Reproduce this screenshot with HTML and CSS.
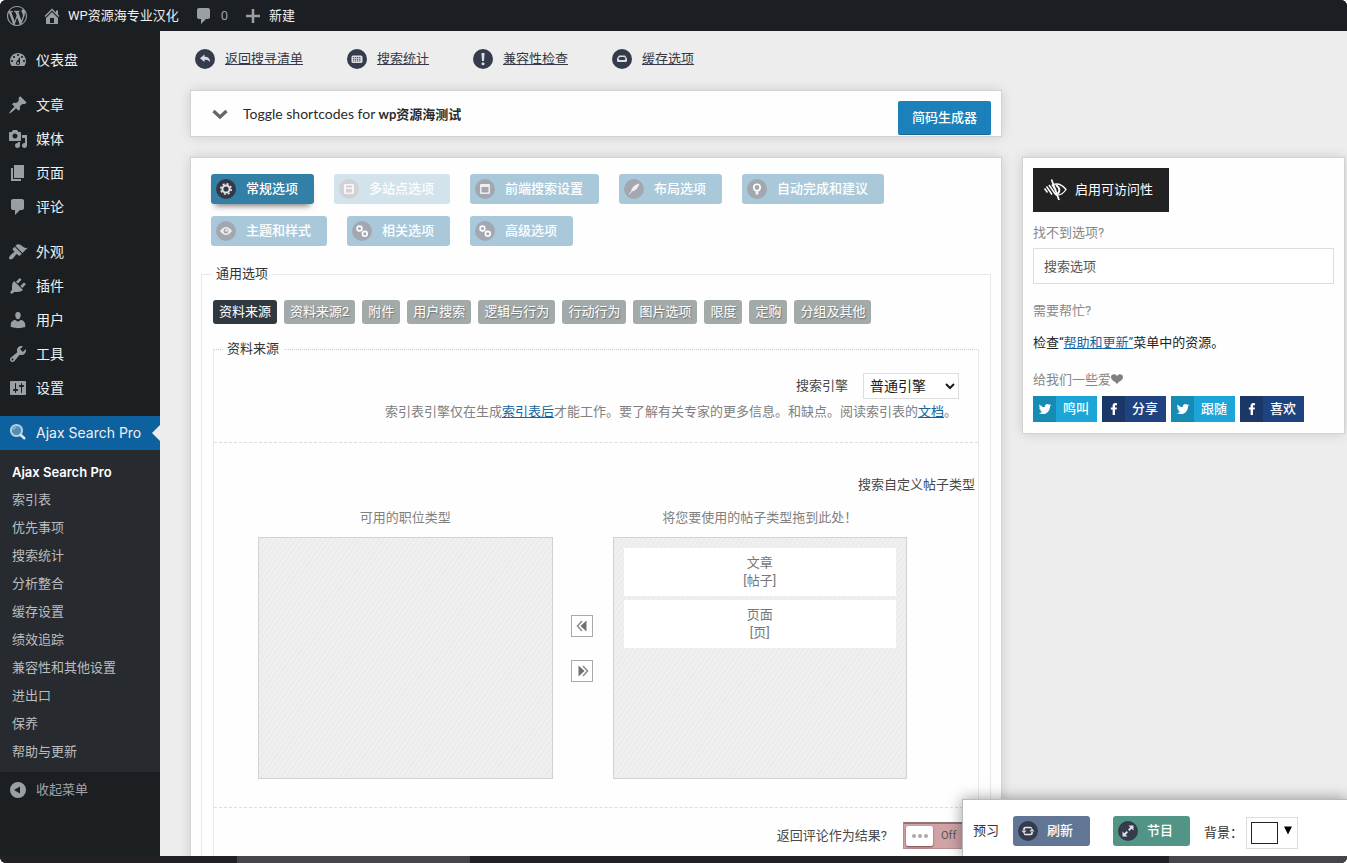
FILE: index.html
```html
<!DOCTYPE html>
<html lang="zh-CN">
<head>
<meta charset="utf-8">
<title>Ajax Search Pro</title>
<link rel="stylesheet" href="styles.css">
</head>
<body>
<div class="app">
  <header class="topbar">
    <a href="#" class="topbar-item" aria-label="WordPress"><svg class="icon" viewBox="0 0 20 20"><path d="M20 10c0-5.51-4.49-10-10-10C4.48 0 0 4.49 0 10c0 5.52 4.48 10 10 10 5.51 0 10-4.48 10-10zM7.78 15.37L4.37 6.22c.55-.02 1.17-.08 1.17-.08.5-.06.44-1.13-.06-1.11 0 0-1.45.11-2.37.11-.18 0-.37 0-.58-.01C4.12 2.69 6.87 1.11 10 1.11c2.33 0 4.45.87 6.05 2.34-.68-.11-1.65.39-1.65 1.58 0 .74.45 1.36.9 2.1.35.61.55 1.36.55 2.46 0 1.49-1.4 5-1.4 5l-3.03-8.37c.54-.02.82-.17.82-.17.5-.05.44-1.25-.06-1.22 0 0-1.44.12-2.38.12-.87 0-2.33-.12-2.33-.12-.5-.03-.56 1.2-.06 1.22l.92.08 1.26 3.41zM17.41 10c.24-.64.74-1.87.43-4.25.7 1.29 1.05 2.71 1.05 4.25 0 3.29-1.73 6.24-4.4 7.78.97-2.59 1.94-5.2 2.92-7.78zM6.1 18.09C3.12 16.65 1.11 13.53 1.11 10c0-1.3.23-2.48.72-3.59C3.25 10.3 4.67 14.2 6.1 18.09zm4.03-6.63l2.58 6.98c-.86.29-1.76.45-2.71.45-.79 0-1.57-.11-2.29-.33.81-2.38 1.62-4.74 2.42-7.1z"/></svg></a>
    <a href="#" class="topbar-item"><svg class="icon" viewBox="0 0 20 20"><path d="M16 8.5l1.53 1.53-1.06 1.06L10 4.6l-6.47 6.49-1.06-1.06L10 2.5l4 4v-2h2v4zm-6-2.46l6 5.99V18H4v-5.97zM12 17v-5H8v5h4z"/></svg>WP资源海专业汉化</a>
    <a href="#" class="topbar-item muted"><svg class="icon" viewBox="0 0 20 20"><path d="M5 2h9c1.1 0 2 .9 2 2v7c0 1.1-.9 2-2 2h-2l-5 5v-5H5c-1.1 0-2-.9-2-2V4c0-1.1.9-2 2-2z"/></svg>0</a>
    <a href="#" class="topbar-item"><svg class="icon" viewBox="0 0 20 20"><path d="M17 8.700v2.600h-5.700V17H8.700v-5.700H3V8.700h5.700V3h2.600v5.700z"/></svg>新建</a>
  </header>

  <nav class="sidebar">
    <ul class="menu">
      <li><a href="#"><svg class="icon" viewBox="0 0 20 20"><path d="M3.76 16h12.480c1.100-1.370 1.760-3.110 1.760-5 0-4.420-3.580-8-8-8s-8 3.580-8 8c0 1.890.66 3.630 1.760 5zM10 4c.55 0 1 .45 1 1s-.45 1-1 1-1-.45-1-1 .45-1 1-1zM6 6c.55 0 1 .45 1 1s-.45 1-1 1-1-.45-1-1 .45-1 1-1zm8 0c.55 0 1 .45 1 1s-.45 1-1 1-1-.45-1-1 .45-1 1-1zm-5.370 5.550L12 7v6c0 1.100-.9 2-2 2s-2-.9-2-2c0-.57.24-1.080.63-1.450zM4 10c.55 0 1 .45 1 1s-.45 1-1 1-1-.45-1-1 .45-1 1-1zm12 0c.55 0 1 .45 1 1s-.45 1-1 1-1-.45-1-1 .45-1 1-1zm-5 3c0-.55-.45-1-1-1s-1 .45-1 1 .45 1 1 1 1-.45 1-1z"/></svg>仪表盘</a></li>
      <li class="spaced"><a href="#"><svg class="icon" viewBox="0 0 20 20"><path d="M10.440 3.020l1.820-1.820 6.360 6.350-1.830 1.820c-1.050-.68-2.480-.57-3.410.36l-.75.75c-.92.93-1.040 2.350-.35 3.410l-1.830 1.820-2.410-2.410-2.800 2.790c-.42.42-3.380 2.710-3.800 2.290s1.860-3.390 2.280-3.810l2.790-2.790L4.100 9.360l1.830-1.820c1.050.69 2.480.57 3.400-.36l.75-.75c.93-.92 1.050-2.350.36-3.410z"/></svg>文章</a></li>
      <li><a href="#"><svg class="icon" viewBox="0 0 20 20"><path d="M13 11V4c0-.55-.45-1-1-1h-1.670L9 1H5L3.670 3H2c-.55 0-1 .45-1 1v7c0 .55.45 1 1 1h10c.55 0 1-.45 1-1zM7 4.500c1.380 0 2.500 1.120 2.500 2.500S8.380 9.500 7 9.500 4.500 8.380 4.500 7 5.620 4.500 7 4.500zM14 6h5v10.500c0 1.380-1.120 2.500-2.500 2.500S14 17.880 14 16.500s1.120-2.500 2.500-2.500c.17 0 .34.02.5.05V9h-3V6zm-4 8.050V13h2v3.500c0 1.380-1.120 2.500-2.500 2.500S7 17.880 7 16.500 8.120 14 9.500 14c.17 0 .34.02.5.05z"/></svg>媒体</a></li>
      <li><a href="#"><svg class="icon" viewBox="0 0 20 20"><path d="M6 15V2h10v13H6zm-1 1h8v2H3V5h2v11z"/></svg>页面</a></li>
      <li><a href="#"><svg class="icon" viewBox="0 0 20 20"><path d="M5 2h9c1.1 0 2 .9 2 2v7c0 1.1-.9 2-2 2h-2l-5 5v-5H5c-1.1 0-2-.9-2-2V4c0-1.1.9-2 2-2z"/></svg>评论</a></li>
      <li class="spaced"><a href="#"><svg class="icon" viewBox="0 0 20 20"><path d="M14.480 11.060L7.410 3.990l1.500-1.500c.5-.56 2.300-.47 3.510.32 1.210.8 1.430 1.280 2.910 2.100 1.180.64 2.450 1.260 4.450.85zm-.71.71L6.700 4.700 4.930 6.470c-.39.39-.39 1.020 0 1.410l1.060 1.060c.39.39.39 1.030 0 1.420-.6.6-1.430 1.110-2.210 1.690-.35.26-.7.53-1.010.84C1.430 14.230.4 16.080 1.400 17.070c.99 1 2.840-.03 4.180-1.360.31-.31.58-.66.85-1.020.57-.78 1.080-1.610 1.690-2.210.39-.39 1.020-.39 1.410 0l1.060 1.060c.39.39 1.020.39 1.410 0z"/></svg>外观</a></li>
      <li><a href="#"><svg class="icon" viewBox="0 0 20 20"><path d="M13.110 4.360L9.870 7.600 8 5.730l3.240-3.240c.35-.34 1.050-.2 1.560.32.52.51.66 1.210.31 1.550zm-8 1.770l.91-1.120 9.010 9.010-1.190.84c-.71.71-2.630 1.160-3.820 1.160H6.140L4.900 17.260c-.59.59-1.540.59-2.120 0-.59-.58-.59-1.530 0-2.120l1.240-1.240v-3.880c0-1.130.4-3.190 1.090-3.890zm7.260 3.970l3.240-3.240c.34-.35 1.040-.21 1.550.31.52.51.66 1.210.31 1.550l-3.240 3.250z"/></svg>插件</a></li>
      <li><a href="#"><svg class="icon" viewBox="0 0 20 20"><path d="M10 9.250c-2.270 0-2.730-3.440-2.730-3.440C7 4.020 7.820 2 9.970 2c2.160 0 2.980 2.020 2.710 3.810 0 0-.41 3.440-2.680 3.440zm0 2.570L12.720 10c2.390 0 4.520 2.330 4.520 4.530v2.490s-3.650 1.130-7.240 1.130c-3.650 0-7.240-1.130-7.240-1.130v-2.490c0-2.250 1.940-4.480 4.470-4.480z"/></svg>用户</a></li>
      <li><a href="#"><svg class="icon" viewBox="0 0 20 20"><path d="M16.680 9.770c-1.340 1.340-3.300 1.670-4.950.99l-5.410 6.520c-.99.99-2.590.99-3.580 0s-.99-2.590 0-3.570l6.520-5.420c-.68-1.650-.35-3.610.99-4.950 1.280-1.280 3.120-1.620 4.720-1.060l-2.890 2.890 2.820 2.820 2.860-2.870c.53 1.580.18 3.390-1.080 4.650zM3.810 16.210c.4.39 1.040.39 1.430 0 .4-.4.4-1.040 0-1.430-.39-.4-1.030-.4-1.430 0-.39.39-.39 1.030 0 1.430z"/></svg>工具</a></li>
      <li><a href="#"><svg class="icon" viewBox="0 0 20 20"><path d="M18 16V4c0-.55-.45-1-1-1H3c-.55 0-1 .45-1 1v12c0 .55.45 1 1 1h14c.55 0 1-.45 1-1zM8 11h1c.55 0 1 .45 1 1s-.45 1-1 1H8v1.500c0 .28-.22.5-.5.5s-.5-.22-.5-.5V13H6c-.55 0-1-.45-1-1s.45-1 1-1h1V5.500c0-.28.22-.5.5-.5s.5.22.5.5V11zm5-2h-1c-.55 0-1-.45-1-1s.45-1 1-1h1V5.500c0-.28.22-.5.5-.5s.5.22.5.5V7h1c.55 0 1 .45 1 1s-.45 1-1 1h-1v5.500c0 .28-.22.5-.5.5s-.5-.22-.5-.5V9z"/></svg>设置</a></li>
      <li class="spaced current"><a href="#"><svg class="icon" viewBox="0 0 20 20"><circle cx="8.500" cy="7.500" r="5.600" fill="#4d8fb8" stroke="#b9cdd9" stroke-width="2"/><path d="M5.500 7a3.500 3.500 0 0 1 3-3" fill="none" stroke="#8fc0dd" stroke-width="1.200"/><path d="M12.800 12l3.500 3.200" stroke="#dfe5e8" stroke-width="2.600" stroke-linecap="round"/></svg>Ajax Search Pro</a></li>
    </ul>
    <ul class="submenu">
      <li><a href="#" class="active">Ajax Search Pro</a></li>
      <li><a href="#">索引表</a></li>
      <li><a href="#">优先事项</a></li>
      <li><a href="#">搜索统计</a></li>
      <li><a href="#">分析整合</a></li>
      <li><a href="#">缓存设置</a></li>
      <li><a href="#">绩效追踪</a></li>
      <li><a href="#">兼容性和其他设置</a></li>
      <li><a href="#">进出口</a></li>
      <li><a href="#">保养</a></li>
      <li><a href="#">帮助与更新</a></li>
    </ul>
    <button type="button" class="collapse"><svg class="icon" viewBox="0 0 20 20"><path fill-rule="evenodd" d="M10 2a8 8 0 1 0 0 16 8 8 0 0 0 0-16zm2 4.500v7L6 10z"/></svg>收起菜单</button>
  </nav>

  <main class="main">
    <nav class="quick-links">
      <a href="#"><svg class="badge" viewBox="0 0 20 20"><circle cx="10" cy="10" r="10"/><path class="glyph" d="M5 9.300l4.500-3.800v2.300c3.500 0 5.500 1.700 5.500 5.200-1.200-1.800-2.800-2.300-5.500-2.300v2.400z"/></svg><span>返回搜寻清单</span></a>
      <a href="#"><svg class="badge" viewBox="0 0 20 20"><circle cx="10" cy="10" r="10"/><rect class="glyph" x="4.500" y="6.500" width="11" height="7.500" rx="1.500"/><path stroke="#343c4c" stroke-width=".9" stroke-dasharray="1.200 .7" d="M6 8.600h8M6 10.300h8M6 12h8"/></svg><span>搜索统计</span></a>
      <a href="#"><svg class="badge" viewBox="0 0 20 20"><circle cx="10" cy="10" r="10"/><path class="glyph" d="M8.400 4h3.200L11 12H9z"/><circle class="glyph" cx="10" cy="14.700" r="1.500"/></svg><span>兼容性检查</span></a>
      <a href="#"><svg class="badge" viewBox="0 0 20 20"><circle cx="10" cy="10" r="10"/><path class="glyph" fill-rule="evenodd" d="M7 6.500h6l2 3v2.500q0 1-1 1H6q-1 0-1-1V9.500zM8.500 8q-2 0-2 1.500T8.500 11h3q2 0 2-1.500T11.500 8z"/></svg><span>缓存选项</span></a>
    </nav>

    <div class="columns">
      <div class="content">
        <section class="panel shortcodes">
          <svg class="chevron" viewBox="0 0 20 20"><path d="M3.500 7l6.500 6 6.500-6" fill="none" stroke="#666" stroke-width="3.200"/></svg>
          <p>Toggle shortcodes for <b>wp资源海测试</b></p>
          <button type="button" class="generate">简码生成器</button>
        </section>

        <section class="panel options">
          <div class="tabs">
            <button type="button" class="tab selected"><svg class="badge" viewBox="0 0 20 20"><circle cx="10" cy="10" r="10"/><g fill="none" stroke="#e3e3e6"><circle cx="10" cy="10" r="3.600" stroke-width="2"/><circle cx="10" cy="10" r="5.200" stroke-width="1.600" stroke-dasharray="2 2.080"/></g></svg>常规选项</button>
            <button type="button" class="tab disabled" disabled><svg class="badge" viewBox="0 0 20 20"><circle cx="10" cy="10" r="10"/><path class="glyph" fill-rule="evenodd" d="M6 5h8l1 1v8q0 1-1 1H6q-1 0-1-1V6q0-1 1-1zm1 1.500v2h6v-2zm0 3.500v3.500h6V10z"/></svg>多站点选项</button>
            <button type="button" class="tab"><svg class="badge" viewBox="0 0 20 20"><circle cx="10" cy="10" r="10"/><path class="glyph" fill-rule="evenodd" d="M6 5h8q1 0 1 1v8q0 1-1 1H6q-1 0-1-1V6q0-1 1-1zm.5 3v5.500h7V8z"/></svg>前端搜索设置</button>
            <button type="button" class="tab"><svg class="badge" viewBox="0 0 20 20"><circle cx="10" cy="10" r="10"/><path class="glyph" d="M15.500 4.500c-1 4-3.500 7-7.500 8l-2.500 3-.7-.6 2.400-2.900C8 8 11 5.500 15.500 4.500z"/></svg>布局选项</button>
            <button type="button" class="tab"><svg class="badge" viewBox="0 0 20 20"><circle cx="10" cy="10" r="10"/><circle cx="10" cy="8.500" r="3.200" fill="none" stroke="#fff" stroke-width="1.600"/><path class="glyph" d="M8.500 12h3v3l-1.500 1-1.500-1z"/></svg>自动完成和建议</button>
            <button type="button" class="tab"><svg class="badge" viewBox="0 0 20 20"><circle cx="10" cy="10" r="10"/><path class="glyph" fill-rule="evenodd" d="M4 10q6-8 12 0-6 8-12 0zm6-2.500a2.500 2.500 0 1 0 0 5 2.500 2.500 0 0 0 0-5z"/><circle class="glyph" cx="10.500" cy="9.500" r="1.200"/></svg>主题和样式</button>
            <button type="button" class="tab"><svg class="badge" viewBox="0 0 20 20"><circle cx="10" cy="10" r="10"/><g fill="none" stroke="#fff" stroke-width="1.600"><circle cx="7.500" cy="7.500" r="2.400"/><circle cx="12.800" cy="12.800" r="2.400"/></g></svg>相关选项</button>
            <button type="button" class="tab"><svg class="badge" viewBox="0 0 20 20"><circle cx="10" cy="10" r="10"/><g fill="none" stroke="#fff" stroke-width="1.600"><circle cx="7.500" cy="7.500" r="2.400"/><circle cx="12.800" cy="12.800" r="2.400"/></g></svg>高级选项</button>
          </div>

          <fieldset class="group">
            <legend>通用选项</legend>
            <div class="pills">
              <button type="button" class="pill selected">资料来源</button>
              <button type="button" class="pill">资料来源2</button>
              <button type="button" class="pill">附件</button>
              <button type="button" class="pill">用户搜索</button>
              <button type="button" class="pill">逻辑与行为</button>
              <button type="button" class="pill">行动行为</button>
              <button type="button" class="pill">图片选项</button>
              <button type="button" class="pill">限度</button>
              <button type="button" class="pill">定购</button>
              <button type="button" class="pill">分组及其他</button>
            </div>

            <fieldset class="subgroup">
              <legend>资料来源</legend>
              <div class="row engine">
                <div class="field">
                  <label for="engine">搜索引擎</label>
                  <select id="engine"><option>普通引擎</option></select>
                </div>
                <p>索引表引擎仅在生成<a href="#">索引表后</a>才能工作。要了解有关专家的更多信息。和缺点。阅读索引表的<a href="#">文档</a>。</p>
              </div>

              <div class="row types">
                <h4>搜索自定义帖子类型</h4>
                <div class="sorter">
                  <div class="list">
                    <h5>可用的职位类型</h5>
                    <ul class="drop"></ul>
                  </div>
                  <div class="movers">
                    <button type="button" aria-label="全部移到左侧"><svg viewBox="0 0 20 20"><path d="M14.500 4.500v11L8.500 10z"/><path d="M10 5l-4.500 5 4.500 5" fill="none" stroke="#8a8a8a" stroke-width="1.500"/></svg></button>
                    <button type="button" aria-label="全部移到右侧"><svg viewBox="0 0 20 20"><path d="M6.500 4.500v11l6-5.500z"/><path d="M11 5l4.500 5-4.500 5" fill="none" stroke="#8a8a8a" stroke-width="1.500"/></svg></button>
                  </div>
                  <div class="list">
                    <h5>将您要使用的帖子类型拖到此处！</h5>
                    <ul class="drop">
                      <li>文章<br>[帖子]</li>
                      <li>页面<br>[页]</li>
                    </ul>
                  </div>
                </div>
              </div>

              <div class="row comments">
                <label for="comments">返回评论作为结果?</label>
                <button type="button" id="comments" class="switch"><span class="knob"><i></i><i></i><i></i></span><span>Off</span></button>
              </div>
            </fieldset>
          </fieldset>
        </section>
      </div>

      <aside class="panel help">
        <button type="button" class="access"><svg viewBox="0 0 24 24" fill="none" stroke="#fff"><path d="M10 6.500c5-1.500 9.500.5 13 5-3 4.500-6.500 6-10 5.500" stroke-width="1.300"/><path d="M13 7q6 4.500 1.500 9" stroke-width="2"/><path d="M1.500 10.500l3 4M3.500 8.500l5.500 8M6 7l7 10M9 6.500l4 6" stroke-width="1.500"/><path d="M8.500 1.500l7.500 20.500" stroke-width="1.700"/></svg>启用可访问性</button>
        <label for="find">找不到选项?</label>
        <input id="find" type="text" placeholder="搜索选项">
        <h3>需要帮忙?</h3>
        <p>检查“<a href="#">帮助和更新”</a>菜单中的资源。</p>
        <h3 class="love">给我们一些爱<svg viewBox="0 0 12 10"><path d="M6 10C4.500 7.500 0 6.500 0 3 0 0 4.500-1 6 2.200 7.500-1 12 0 12 3c0 3.500-4.500 4.500-6 7z"/></svg></h3>
        <div class="social">
          <a href="#" class="tw"><span><svg viewBox="0 0 20 20"><path d="M18.940 4.460c-.49.73-1.110 1.380-1.830 1.900.01.15.01.31.01.47 0 4.850-3.690 10.440-10.430 10.440-2.070 0-4-.61-5.630-1.650.29.03.58.05.88.05 1.720 0 3.300-.59 4.550-1.570-1.600-.03-2.950-1.090-3.420-2.550.22.04.45.07.69.07.33 0 .66-.05.96-.13-1.670-.34-2.940-1.820-2.940-3.600v-.04c.5.27 1.060.44 1.660.46-.98-.66-1.630-1.780-1.630-3.060 0-.67.18-1.300.5-1.840 1.810 2.220 4.510 3.680 7.560 3.830-.06-.27-.1-.55-.1-.84 0-2.020 1.650-3.660 3.670-3.660 1.060 0 2.010.44 2.680 1.160.83-.17 1.620-.47 2.330-.89-.28.85-.86 1.570-1.620 2.020.75-.08 1.450-.28 2.110-.57z"/></svg></span>鸣叫</a>
          <a href="#" class="fb"><span><svg viewBox="0 0 20 20"><path d="M8 18.500v-7.700H5.500V7.700H8V5.400C8 2.900 9.500 1.500 11.800 1.500l2.500.2v2.800h-1.600c-1 0-1.300.6-1.300 1.300v1.900h2.800l-.4 3.100h-2.400v7.700z"/></svg></span>分享</a>
          <a href="#" class="tw"><span><svg viewBox="0 0 20 20"><path d="M18.940 4.460c-.49.73-1.110 1.380-1.830 1.900.01.15.01.31.01.47 0 4.850-3.690 10.440-10.430 10.440-2.070 0-4-.61-5.630-1.650.29.03.58.05.88.05 1.720 0 3.300-.59 4.550-1.570-1.600-.03-2.950-1.090-3.420-2.550.22.04.45.07.69.07.33 0 .66-.05.96-.13-1.670-.34-2.940-1.820-2.940-3.600v-.04c.5.27 1.060.44 1.660.46-.98-.66-1.630-1.780-1.630-3.060 0-.67.18-1.300.5-1.840 1.810 2.220 4.510 3.680 7.560 3.830-.06-.27-.1-.55-.1-.84 0-2.020 1.650-3.660 3.670-3.660 1.060 0 2.010.44 2.680 1.160.83-.17 1.620-.47 2.330-.89-.28.85-.86 1.570-1.620 2.020.75-.08 1.450-.28 2.110-.57z"/></svg></span>跟随</a>
          <a href="#" class="fb"><span><svg viewBox="0 0 20 20"><path d="M8 18.500v-7.700H5.500V7.700H8V5.400C8 2.900 9.500 1.500 11.800 1.500l2.500.2v2.800h-1.600c-1 0-1.300.6-1.300 1.300v1.900h2.800l-.4 3.100h-2.400v7.700z"/></svg></span>喜欢</a>
        </div>
      </aside>
    </div>

    <div class="preview">
      <span>预习</span>
      <button type="button" class="action refresh"><svg class="badge" viewBox="0 0 20 20"><circle cx="10" cy="10" r="10"/><g fill="none" stroke="#e8e8ec" stroke-width="1.700"><path d="M6 9V8q0-1.500 1.500-1.500H12q1.500 0 1.500 1M14 11v1q0 1.500-1.500 1.500H8q-1.500 0-1.500-1"/></g><path class="glyph" d="M3.500 9.500h5L6 12.500zM11.500 10.500h5L14 7.500z"/></svg>刷新</button>
      <button type="button" class="action show"><svg class="badge" viewBox="0 0 20 20"><circle cx="10" cy="10" r="10"/><path class="glyph" d="M10.500 4.500h5v5zM4.500 10.500v5h5z"/><path d="M6.500 13.500l7-7" stroke="#e8e8ec" stroke-width="1.800" stroke-dasharray="4 2"/></svg>节目</button>
      <div class="background"><label for="swatch">背景：</label><button type="button" id="swatch" class="swatch"><i></i><svg viewBox="0 0 10 10"><path d="M0 0h10L5 10z"/></svg></button></div>
    </div>
  </main>
  <footer class="strip"><i class="one"></i><i class="two"></i></footer>
</div>
</body>
</html>
```
FILE: styles.css
```css
* { box-sizing: border-box; }
body { margin: 0; background: #fff; color: #333; font: 13px/18px Roboto, "Noto Sans CJK SC", sans-serif; }
button, input, select { font: inherit; color: inherit; }
button { border: 0; padding: 0; cursor: pointer; }
ul, p, h3, h4, h5 { margin: 0; padding: 0; font-size: 13px; font-weight: 400; }
ul { list-style: none; }
a { color: #1564a0; }

.app { display: grid; grid-template: 31px minmax(0, 1fr) 7px / 160px minmax(0, 1fr); height: 100vh; overflow: hidden; border-radius: 6px; background: #1b1f23; }
.icon { width: 20px; height: 20px; flex: none; fill: #9a9fa4; }
.badge { width: 20px; height: 20px; flex: none; fill: #343c4c; }
.badge .glyph { fill: #dcdde4; }

.topbar { grid-column: 1 / -1; display: flex; gap: 15px; align-items: center; padding-left: 7px; background: #1b1f24; }
.topbar-item { display: flex; align-items: center; gap: 6px; color: #f0f0f1; text-decoration: none; }
.topbar-item.muted { color: #9a9fa4; gap: 7px; }

.sidebar { background: #1b1f22; padding-top: 12px; overflow: hidden; }
.menu a { display: flex; align-items: center; gap: 8px; height: 34px; padding-left: 8px; color: #f0f0f1; text-decoration: none; font: 14px/20px Inter, "Noto Sans CJK SC", sans-serif; }
.spaced { margin-top: 11px; }
.current { position: relative; background: #0e619f; }
.current::after { content: ""; position: absolute; right: 0; top: 9px; border: 8px solid transparent; border-left: 0; border-right-color: #ededed; }
.submenu { padding: 8px 0 6px; background: #272b2f; }
.submenu a { display: block; padding: 5px 12px; color: #babdc0; text-decoration: none; }
.submenu .active { color: #fff; font-weight: 600; font-family: Inter, sans-serif; }
.collapse { display: flex; align-items: center; gap: 8px; height: 36px; padding-left: 8px; background: none; color: #a0a4a8; }

.main { position: relative; overflow: hidden; padding: 18px 3px 0 31px; background: #ededed; }
.quick-links { display: flex; gap: 44px; padding-left: 4px; height: 42px; }
.quick-links a { display: flex; gap: 10px; height: 20px; align-items: center; color: #343844; }
.columns { display: grid; grid-template-columns: minmax(0, 1fr) 321px; gap: 22px; align-items: start; }
.panel { background: #fefefe; outline: 1px solid #d2d2d2; box-shadow: 0 0 12px rgba(0, 0, 0, .16); }

.shortcodes { display: flex; height: 45px; padding: 0 10px 0 19px; align-items: center; }
.shortcodes p { flex: 1; font-size: 14px; font-family: Lato, "Noto Sans CJK SC", sans-serif; color: #2b2b2b; }
.shortcodes p b { font-weight: 700; font-size: 13px; }
.chevron { width: 20px; height: 20px; margin-right: 13px; }
.generate { height: 34px; padding: 0 14px; margin-top: 9px; border-radius: 2px; background: #1c80bb; border-bottom: 1px solid #176894; color: #fff; font-weight: 500; }

.options { margin-top: 22px; padding: 16px 10px 0; }
.tabs { display: flex; flex-wrap: wrap; gap: 12px 20px; padding-left: 10px; }
.tab { display: flex; align-items: center; gap: 10px; height: 30px; padding: 0 16px 0 5px; border-radius: 3px; background: #a9c9db; color: #fff; font-weight: 500; }
.tab .badge { fill: #a3a7b0; }
.tab .glyph { fill: #f2eef0; }
.tab.selected { background: #3280a5; box-shadow: 0 6px 6px -4px rgba(0, 0, 0, .5); }
.tab.selected .badge { fill: #343844; }
.tab.disabled { opacity: .5; }

fieldset { min-width: 0; margin: 0; padding: 0; border: 1px solid #e8e8e8; }
legend { padding: 0 4px; line-height: 18px; }
.group { margin-top: 19px; padding: 0 11px; }
.group > legend { margin-left: -1px; }
.pills { display: flex; flex-wrap: wrap; gap: 7px; padding-top: 17px; }
.pill { height: 24px; padding: 0 6px; border-radius: 3px; background: #a3aaaa; color: #fff; text-shadow: 1px 1px 1px rgba(60, 60, 60, .5); }
.pill.selected { background: #303840; }
.subgroup { margin-top: 16px; border-top-style: dotted; border-top-color: #ccc; }
.subgroup > legend { margin-left: 9px; }
.row { border-bottom: 1px dashed #ddd; }
.engine { padding: 15px 19px 21px; text-align: right; color: #808080; }
.field { display: flex; justify-content: flex-end; align-items: center; gap: 15px; color: #484848; height: 26px; }
.field select { width: 96px; height: 26px; border: 1px solid #ddd; background: #fff; color: #1b1b1b; font-size: 14px; padding-left: 2px; }
.engine p { margin-top: 4px; padding-right: 2px; }
.types { padding: 33px 0 28px; }
.types h4 { text-align: right; padding-right: 3px; color: #484848; }
.sorter { display: flex; margin-top: 15px; padding: 0 71px 0 44px; color: #808080; }
.list { flex: 1; text-align: center; }
.drop { height: 242px; margin-top: 10px; padding: 10px; border: 1px solid #d2d2d2; background: repeating-linear-gradient(125deg, #f0f0f0 0 2px, #ebebeb 2px 4px); }
.drop li { padding: 6px 0; margin-bottom: 4px; background: #fff; color: #777; }
.movers { display: flex; flex-direction: column; gap: 23px; padding: 106px 20px 0 18px; }
.movers button { width: 22px; height: 22px; border: 1px solid #aaa; background: #fff; }
.movers svg { display: block; width: 20px; height: 20px; fill: #707070; }
.comments { display: flex; justify-content: flex-end; align-items: center; gap: 16px; height: 56px; padding-right: 9px; color: #484848; }
.switch { display: flex; align-items: center; gap: 8px; width: 66px; height: 27px; padding: 2px; border: 1px solid #b38f91; border-top: 2px solid #8d7375; background: #d1a3a5; color: #555; font-size: 11px; }
.knob { display: flex; gap: 2px; align-items: center; justify-content: center; width: 27px; height: 20px; border-radius: 2px; background: #fff; box-shadow: 0 1px 2px #744; }
.knob i { width: 4px; height: 4px; border-radius: 50%; background: #aaa; }

.help { display: flex; flex-direction: column; align-items: flex-start; margin-top: 67px; padding: 10px 10px 11px; }
.help label, .help h3 { color: #878787; }
.access { display: flex; align-items: center; gap: 8px; height: 44px; padding: 0 16px 0 10px; background: #222; color: #fff; }
.access svg { width: 24px; height: 24px; }
.help label { margin-top: 12px; }
.help input { width: 100%; height: 36px; margin-top: 6px; padding: 0 10px; border: 1px solid #ddd; background: #fff; }
.help input::placeholder { color: #555; opacity: 1; }
.help h3 { margin-top: 18px; }
.help p { margin-top: 14px; color: #222; }
.help h3.love { margin-top: 19px; }
.love svg { width: 12px; height: 10px; fill: #808080; }
.social { display: flex; gap: 5px; margin-top: 7px; }
.social a { display: flex; align-items: center; height: 26px; width: 64px; gap: 7px; color: #fff; text-decoration: none; font-weight: 500; }
.social span { display: flex; align-items: center; justify-content: center; width: 23px; height: 26px; }
.social svg { width: 14px; height: 14px; fill: #fff; }
.tw { background: #1ba5d8; }
.tw span { background: #168bb3; }
.fb { background: #1f4380; }
.fb span { background: #1a3768; }

.preview { position: absolute; right: 0; bottom: 0; display: flex; align-items: center; width: 385px; height: 57px; padding: 6px 0 0 10px; background: #fff; border: 1px solid #bbb; border-width: 1px 0 0 1px; box-shadow: 0 0 14px rgba(0, 0, 0, .4); }
.action { display: flex; align-items: center; gap: 9px; height: 30px; width: 77px; padding-left: 5px; border-radius: 3px; color: #fff; font-weight: 500; }
.refresh { margin-left: 14px; background: #607694; }
.show { margin: 0 14px 0 23px; background: #529486; }
.background { display: flex; align-items: center; gap: 3px; margin-top: 3px; }
.swatch { display: flex; align-items: center; gap: 6px; height: 32px; width: 52px; padding-left: 4px; border: 1px solid #ddd; background: #fff; }
.swatch i { width: 27px; height: 22px; border: 1px solid #222; }
.swatch svg { width: 8px; height: 9px; margin-top: -4px; }

.strip { grid-column: 1 / -1; display: flex; justify-content: space-between; padding-left: 17.6%; background: #212125; }
.strip i { background: #464549; }
.one { width: 21%; }
.two { width: 16%; }
```
